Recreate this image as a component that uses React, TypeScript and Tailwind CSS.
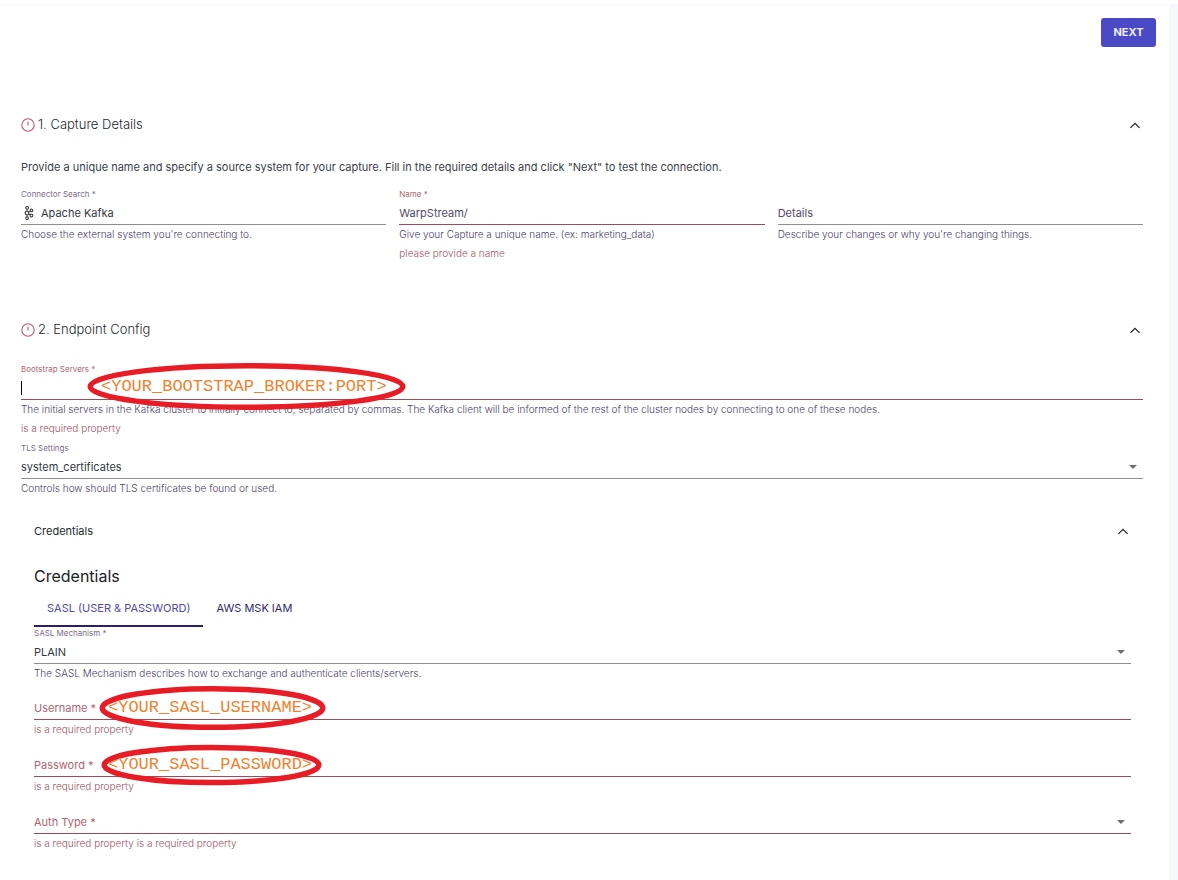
import { useState, type ReactNode } from "react";
import { SiApachekafka } from "react-icons/si";

function AlertIcon() {
  return (
    <svg className="size-3.5 shrink-0" viewBox="0 0 14 14" fill="none" stroke="#c0586c" aria-hidden="true">
      <circle cx="7" cy="7" r="6.2" strokeWidth="1.1" />
      <path d="M7 3.6v4" strokeWidth="1.1" />
    </svg>
  );
}

function ChevronUp() {
  return (
    <svg className="size-4" viewBox="0 0 16 16" fill="none" stroke="#26262b" strokeWidth="1.3" aria-hidden="true">
      <path d="M3.4 10.9 8 6.3l4.6 4.6" />
    </svg>
  );
}

function Caret() {
  return (
    <svg className="pointer-events-none mr-1.5 h-1 w-2 shrink-0" viewBox="0 0 8 4" fill="#6f6f73" aria-hidden="true">
      <path d="M0 0h8L4 4z" />
    </svg>
  );
}

function SectionHeader({ title, icon, small }: { title: string; icon?: boolean; small?: boolean }) {
  return (
    <div className="flex h-6 items-center justify-between">
      <h2 className={`flex items-center gap-[3px] text-[#24292f] ${small ? "text-[11px]" : "text-[13px] font-light"}`}>
        {icon && <AlertIcon />}
        {title}
      </h2>
      <button type="button" aria-label={`Collapse ${title}`}>
        <ChevronUp />
      </button>
    </div>
  );
}

type FieldProps = {
  id: string;
  label: string;
  inline?: boolean;
  error?: boolean;
  helper?: string;
  message?: string;
  start?: ReactNode;
  value?: string;
  options?: string[];
  type?: string;
  valueColor?: string;
  children?: ReactNode;
};

function Field({
  id,
  label,
  inline,
  error,
  helper,
  message,
  start,
  value = "",
  options,
  type = "text",
  valueColor = "text-[#34383f]",
  children,
}: FieldProps) {
  const [current, setCurrent] = useState(value);
  const labelColor = error ? "text-[#b0656f]" : inline ? "text-[#51496b]" : "text-[#7a6d8c]";
  return (
    <div className={`relative min-w-0 ${inline ? "pt-3" : ""}`}>
      {!inline && (
        <label htmlFor={id} className={`block h-3 text-[8px] leading-3 ${labelColor}`}>
          {label}
        </label>
      )}
      <div className={`flex h-[25px] items-center border-b pt-0.5 ${error ? "border-[#9c4b5a]" : "border-[#8f8c92]"}`}>
        {inline && (
          <label htmlFor={id} className={`shrink-0 text-[11px] ${labelColor}`}>
            {label}
          </label>
        )}
        {start}
        {options ? (
          <>
            <select
              id={id}
              value={current}
              onChange={(e) => setCurrent(e.target.value)}
              className={`min-w-0 flex-1 appearance-none bg-transparent text-[11px] outline-none ${valueColor}`}
            >
              {options.map((o) => (
                <option key={o} value={o}>
                  {o}
                </option>
              ))}
            </select>
            <Caret />
          </>
        ) : (
          <input
            id={id}
            type={type}
            value={current}
            onChange={(e) => setCurrent(e.target.value)}
            className={`min-w-0 flex-1 bg-transparent text-[11px] outline-none ${valueColor}`}
          />
        )}
      </div>
      {helper && <p className="text-[10px] leading-[19px] font-light text-[#4c4068]">{helper}</p>}
      {message && <p className="text-[10px] leading-[19px] font-light text-[#a4525e]">{message}</p>}
      {children}
    </div>
  );
}

function Callout({ text, className }: { text: string; className: string }) {
  return (
    <div className={`pointer-events-none absolute flex items-center ${className}`}>
      <svg className="absolute inset-0 size-full overflow-visible" viewBox="0 0 100 100" preserveAspectRatio="none" aria-hidden="true">
        <ellipse cx="50" cy="50" rx="49" ry="44" fill="none" stroke="#e81c24" strokeWidth="5.5" vectorEffect="non-scaling-stroke" />
      </svg>
      <span className="relative font-['Liberation_Mono',monospace] text-[17px] leading-5 whitespace-nowrap text-[#f0822e]">
        {text}
      </span>
    </div>
  );
}

export default function App() {
  return (
    <div className="flex min-h-screen bg-white pt-1 font-['Inter',sans-serif]">
      <main className="min-w-0 flex-1 border-t border-[#f6f6f8] pb-7">
        <div className="flex justify-end pt-[13px] pr-[13px]">
          <button
            type="button"
            className="h-[29px] min-w-[55px] rounded-[3px] bg-[#4a49c6] px-3 text-[11px] font-bold text-[#eeeefc]"
          >
            NEXT
          </button>
        </div>

        <form className="pr-[26px] pl-[21px]" onSubmit={(e) => e.preventDefault()}>
          <section className="pt-[66px]">
            <SectionHeader title="1. Capture Details" icon />
            <p className="mt-[21px] mb-3 text-[11px] leading-[18px] text-[#3c4147]">
              Provide a unique name and specify a source system for your capture. Fill in the required details and click
              "Next" to test the connection.
            </p>
            <div className="grid grid-cols-3 gap-[13px]">
              <Field
                id="connector"
                label="Connector Search *"
                value="Apache Kafka"
                helper="Choose the external system you're connecting to."
                start={<SiApachekafka className="mr-[5px] ml-px size-3.5 text-[#2b2b2b]" aria-hidden="true" />}
              />
              <Field
                id="name"
                label="Name *"
                error
                value="WarpStream/"
                valueColor="text-[#51496b]"
                helper="Give your Capture a unique name. (ex: marketing_data)"
                message="please provide a name"
              />
              <Field id="details" label="Details" inline helper="Describe your changes or why you're changing things." />
            </div>
          </section>

          <section className="pt-[55px]">
            <SectionHeader title="2. Endpoint Config" icon />
            <div className="mt-[21px] flex flex-col gap-1">
              <Field
                id="bootstrap"
                label="Bootstrap Servers *"
                error
                helper="The initial servers in the Kafka cluster to initially connect to, separated by commas. The Kafka client will be informed of the rest of the cluster nodes by connecting to one of these nodes."
                message="is a required property"
                start={<span className="h-3.5 w-px bg-black" />}
              >
                <Callout text="<YOUR_BOOTSTRAP_BROKER:PORT>" className="top-0 left-[66px] h-[47px] w-[319px] pl-3.5" />
              </Field>
              <Field
                id="tls"
                label="TLS Settings"
                value="system_certificates"
                options={["system_certificates"]}
                helper="Controls how should TLS certificates be found or used."
              />
            </div>

            <div className="mt-[21px] pr-3 pl-[13px]">
              <SectionHeader title="Credentials" small />
              <h3 className="mt-[21px] text-base leading-6 text-[#1d2126]">Credentials</h3>
              <div role="tablist" className="flex h-[39px] text-[11px]">
                <button
                  type="button"
                  role="tab"
                  aria-selected="true"
                  className="border-b-2 border-[#2a1f6b] px-[13px] pt-1 text-[#514aa6]"
                >
                  SASL (USER &amp; PASSWORD)
                </button>
                <button
                  type="button"
                  role="tab"
                  aria-selected="false"
                  className="border-b-2 border-transparent px-[13px] pt-1 text-[#33276b]"
                >
                  AWS MSK IAM
                </button>
              </div>
              <Field
                id="mechanism"
                label="SASL Mechanism *"
                value="PLAIN"
                options={["PLAIN"]}
                helper="The SASL Mechanism describes how to exchange and authenticate clients/servers."
              />
              <div className="flex flex-col gap-px">
                <Field id="username" label="Username *" inline error message="is a required property">
                  <Callout text="<YOUR_SASL_USERNAME>" className="top-[3px] left-[66px] h-11 w-[225px] pl-2" />
                </Field>
                <Field id="password" label="Password *" type="password" inline error message="is a required property">
                  <Callout text="<YOUR_SASL_PASSWORD>" className="top-[5px] left-[68px] h-10 w-[219px] pl-1.5" />
                </Field>
                <Field
                  id="auth"
                  label="Auth Type *"
                  inline
                  error
                  options={[""]}
                  message="is a required property is a required property"
                />
              </div>
            </div>
          </section>
        </form>
      </main>
      <div className="w-[9px] shrink-0 bg-[#f7f8fd]" />
    </div>
  );
}
